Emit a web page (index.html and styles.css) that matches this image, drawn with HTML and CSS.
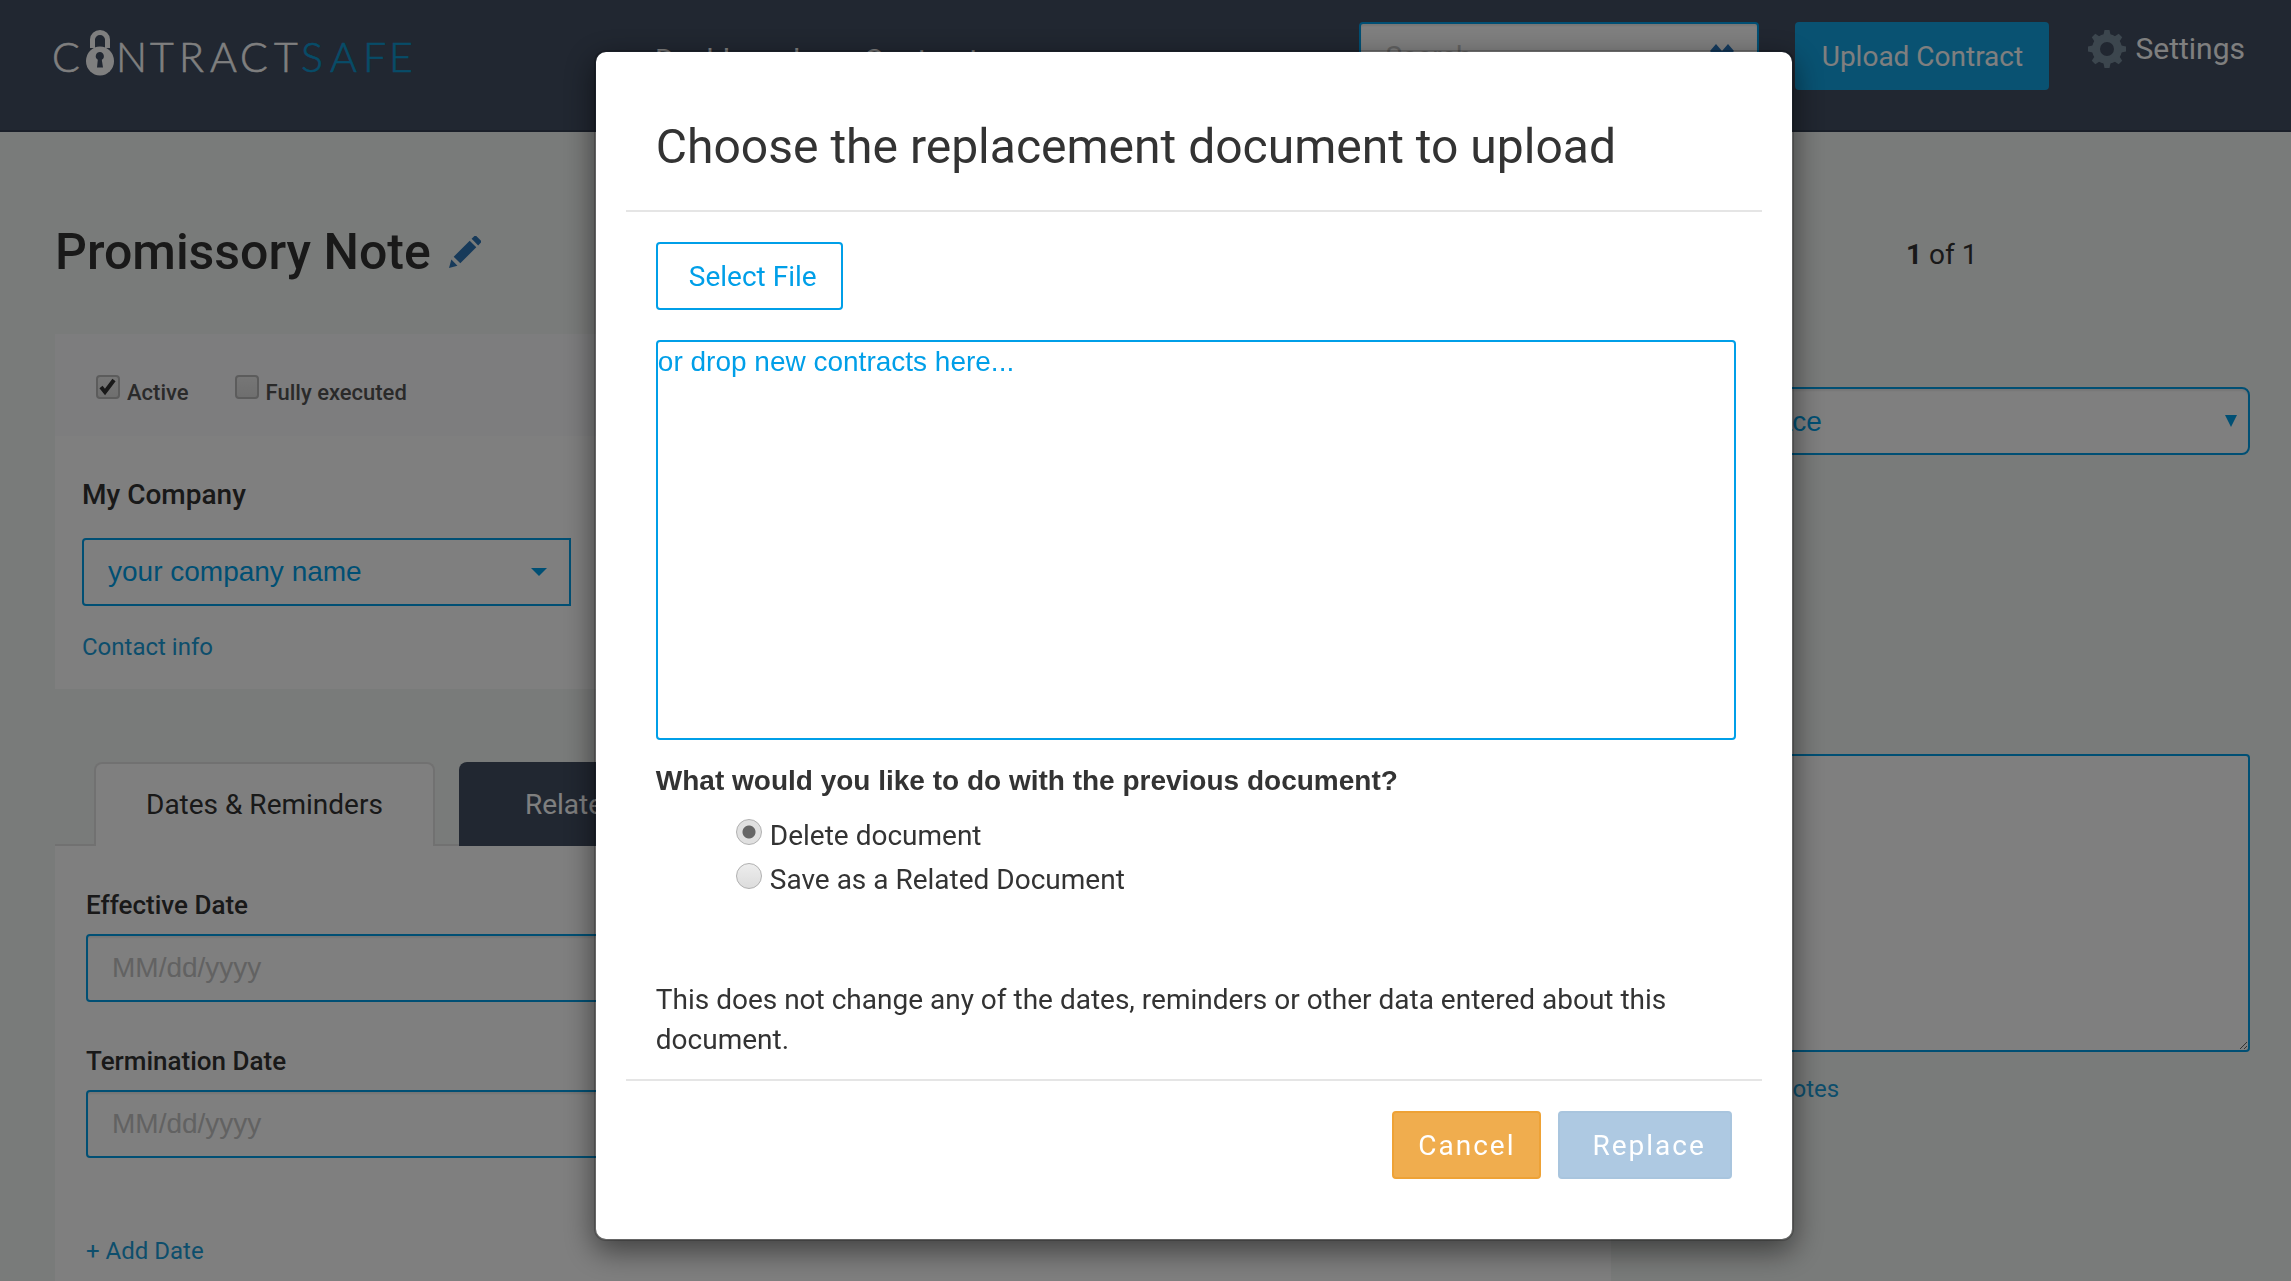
FILE: index.html
```html
<!DOCTYPE html>
<html lang="en">
<head>
    <meta charset="UTF-8">
    <meta name="viewport" content="width=device-width, initial-scale=1.0">
    <title>ContractSafe - Promissory Note</title>
    <link rel="stylesheet" href="styles.css">
</head>
<body>
    <header class="navbar">
        <a class="logo" href="#" aria-label="ContractSafe">
            <svg class="logo-image" viewBox="-6 -8 376 70">
                <text class="logo-text" y="42" x="-2 62 96 125 156 186 220">CNTRACT</text>
                <text class="logo-text logo-safe" y="42" x="247 276 309 335">SAFE</text>
                <path class="logo-shackle" d="M38.500 18V9.500a7.500 7 0 0 1 15 0V18"/>
                <ellipse class="logo-lock" cx="46" cy="31" rx="14" ry="14.500"/>
                <path class="logo-keyhole" d="M46 22a4.200 4.200 0 0 0-2.200 7.800L43 37.500h6l-1.200-7.700A4.200 4.200 0 0 0 46 22z"/>
            </svg>
        </a>
        <nav class="nav-links">
            <a href="#">Dashboard</a>
            <a href="#">Contracts</a>
        </nav>
        <div class="search">
            <input class="search-input" type="text" placeholder="Search" aria-label="Search">
            <button class="search-clear" aria-label="Clear search">
                <svg viewBox="0 0 24 24"><path d="M6 0l6 7 6-7 6 7-6 6 6 6-6 5-6-6-6 6-6-5 6-6-6-6z"/></svg>
            </button>
        </div>
        <button class="btn-upload">Upload Contract</button>
        <a class="settings" href="#">
            <svg class="settings-icon" viewBox="0 0 40 40">
                <circle cx="20" cy="20" r="11" fill="none" stroke="#798c9c" stroke-width="8"/>
                <path id="tooth" d="M17.500 1h5l1.500 7h-8z"/>
                <use href="#tooth" transform="rotate(45 20 20)"/>
                <use href="#tooth" transform="rotate(90 20 20)"/>
                <use href="#tooth" transform="rotate(135 20 20)"/>
                <use href="#tooth" transform="rotate(180 20 20)"/>
                <use href="#tooth" transform="rotate(225 20 20)"/>
                <use href="#tooth" transform="rotate(270 20 20)"/>
                <use href="#tooth" transform="rotate(315 20 20)"/>
            </svg>
            Settings
        </a>
    </header>

    <main class="page">
        <section class="contract">
            <div class="title-row">
                <h1 class="contract-title">Promissory Note</h1>
                <button class="edit-title" aria-label="Edit title">
                    <svg viewBox="0 0 34 34"><path d="M0 34l2.500-9 6.500 6.500zM5 22L22 5l7 7-17 17zM24 3l2.500-2.500a2 2 0 0 1 3 0l4 4a2 2 0 0 1 0 3L31 10z"/></svg>
                </button>
            </div>

            <div class="card">
                <div class="status-bar">
                    <label class="check"><input type="checkbox" checked> Active</label>
                    <label class="check"><input type="checkbox"> Fully executed</label>
                </div>
                <div class="company">
                    <label class="field-label company-label" for="company">My Company</label>
                    <select class="company-select" id="company">
                        <option>your company name</option>
                    </select>
                    <a class="link" href="#">Contact info</a>
                </div>
            </div>

            <div class="tabs">
                <button class="tab active">Dates &amp; Reminders</button>
                <button class="tab">Related</button>
            </div>
            <div class="tab-panel">
                <div class="field">
                    <label class="field-label" for="effective">Effective Date</label>
                    <input class="text-input" id="effective" type="text" placeholder="MM/dd/yyyy">
                </div>
                <div class="field">
                    <label class="field-label" for="termination">Termination Date</label>
                    <input class="text-input" id="termination" type="text" placeholder="MM/dd/yyyy">
                </div>
                <a class="link add-date" href="#">+ Add Date</a>
            </div>
        </section>

        <aside class="sidebar">
            <p class="pager"><strong>1</strong> of 1</p>
            <select class="side-select" aria-label="Action">
                <option>Select place</option>
            </select>
            <textarea class="notes" aria-label="Notes"></textarea>
            <a class="link notes-link" href="#">Show all notes</a>
        </aside>
    </main>

    <div class="backdrop">
        <div class="modal" role="dialog" aria-labelledby="modal-title">
            <div class="modal-header">
                <h2 class="modal-title" id="modal-title">Choose the replacement document to upload</h2>
            </div>
            <div class="modal-body">
                <button class="btn-select">Select File</button>
                <div class="drop-zone">or drop new contracts here...</div>
                <fieldset class="previous">
                    <legend>What would you like to do with the previous document?</legend>
                    <label class="radio"><input type="radio" name="previous" checked> Delete document</label>
                    <label class="radio"><input type="radio" name="previous"> Save as a Related Document</label>
                </fieldset>
                <p class="hint">This does not change any of the dates, reminders or other data entered about this document.</p>
            </div>
            <div class="modal-footer">
                <button class="btn btn-cancel">Cancel</button>
                <button class="btn btn-replace">Replace</button>
            </div>
        </div>
    </div>
</body>
</html>
```

FILE: styles.css
```css
* {
    margin: 0;
    padding: 0;
    box-sizing: border-box;
}

body {
    font-family: Roboto, sans-serif;
    font-size: 28px;
    line-height: 40px;
    color: #333;
    background: #f3f6f4;
    height: 100vh;
    overflow: hidden;
    display: flex;
    flex-direction: column;
}

a {
    text-decoration: none;
}

button,
input,
select,
textarea {
    font-family: inherit;
    font-size: 28px;
    color: inherit;
}

button {
    cursor: pointer;
}

/* Navbar */
.navbar {
    flex: none;
    height: 132px;
    padding: 22px 46px 0 48px;
    display: flex;
    align-items: flex-start;
    background: #424e62;
    border-bottom: 2px solid #343f52;
    color: #fff;
}

.logo-image {
    display: block;
    width: 376px;
    height: 70px;
}

.logo-text {
    font-family: Lato, sans-serif;
    font-size: 41px;
    font-weight: 300;
    fill: #fff;
    stroke: #fff;
    stroke-width: 0.6;
}

.logo-safe {
    fill: #0f98d0;
    stroke: #0f98d0;
}

.logo-shackle {
    fill: none;
    stroke: #fff;
    stroke-width: 5;
}

.logo-lock {
    fill: #fff;
}

.logo-keyhole {
    fill: #424e62;
}

.nav-links {
    flex: 1;
    margin: 18px 0 0 231px;
    display: flex;
    gap: 64px;
    font-size: 30px;
}

.nav-links a {
    color: #fff;
}

.search {
    position: relative;
    width: 400px;
    margin-right: 36px;
}

.search-input {
    width: 100%;
    height: 68px;
    padding: 0 60px 0 24px;
    border: 2px solid #009fe8;
    border-radius: 4px;
    background: #fff;
    box-shadow: inset 0 2px 2px rgba(0, 0, 0, 0.08);
}

.search-clear {
    position: absolute;
    top: 22px;
    right: 25px;
    width: 24px;
    height: 24px;
    border: none;
    background: none;
    fill: #2a77bd;
}

.search-clear svg {
    display: block;
}

.btn-upload {
    width: 254px;
    height: 68px;
    border: none;
    border-radius: 4px;
    background: #12a5e5;
    color: #fff;
}

.settings {
    margin-left: 38px;
    padding-top: 7px;
    display: flex;
    align-items: center;
    gap: 8px;
    font-size: 30px;
    color: #fff;
}

.settings-icon {
    width: 40px;
    height: 40px;
    fill: #798c9c;
}

/* Page */
.page {
    flex: 1;
    padding: 0 41px 0 55px;
    display: grid;
    grid-template-columns: minmax(0, 13fr) minmax(0, 5fr);
    gap: 40px;
}

.contract {
    display: flex;
    flex-direction: column;
}

.title-row {
    padding: 80px 0 42px;
    display: flex;
    align-items: center;
    gap: 18px;
}

.contract-title {
    font-size: 50px;
    font-weight: 500;
    line-height: 80px;
}

.edit-title {
    width: 32px;
    height: 32px;
    border: none;
    background: none;
    fill: #2f75b5;
}

.edit-title svg {
    display: block;
}

.card {
    background: #fff;
}

.status-bar {
    height: 102px;
    padding: 16px 41px 0;
    display: flex;
    align-items: center;
    gap: 46px;
    background: #fafbfd;
}

.check {
    display: flex;
    align-items: center;
    gap: 7px;
    font-size: 22px;
    font-weight: 500;
    color: #555;
}

.check input {
    appearance: none;
    width: 24px;
    height: 24px;
    margin-bottom: 12px;
    border: 2px solid #b8b8b8;
    border-radius: 4px;
    background: linear-gradient(#ededed, #dedede);
}

.check input:checked {
    background: url("data:image/svg+xml,%3Csvg xmlns='http://www.w3.org/2000/svg' viewBox='0 0 20 20'%3E%3Cpath d='M3 10l4 5L16 3' fill='none' stroke='%23333' stroke-width='4'/%3E%3C/svg%3E"), linear-gradient(#ededed, #dedede);
}

.company {
    padding: 39px 27px 22px;
    display: flex;
    flex-direction: column;
    align-items: flex-start;
}

.field-label {
    display: block;
    font-weight: 500;
}

.company-label {
    margin-bottom: 23px;
}

.company-select {
    appearance: none;
    width: 489px;
    height: 68px;
    margin-bottom: 21px;
    padding: 0 0 2px 24px;
    border: 2px solid #009fe8;
    border-radius: 4px 0 0 4px;
    font-family: "Liberation Sans", sans-serif;
    color: #009fe8;
    background: #fff url("data:image/svg+xml,%3Csvg xmlns='http://www.w3.org/2000/svg' viewBox='0 0 16 8'%3E%3Cpath d='M0 0h16L8 8z' fill='%23009fe8'/%3E%3C/svg%3E") no-repeat right 22px center / 16px 8px;
}

.link {
    font-size: 24px;
    color: #1a9cd8;
}

/* Tabs */
.tabs {
    margin-top: 73px;
    padding-left: 39px;
    display: flex;
    gap: 24px;
    border-bottom: 2px solid #e3e3e3;
}

.tab {
    height: 84px;
    margin-bottom: -2px;
    padding: 0 66px;
    border: none;
    border-radius: 8px 8px 0 0;
    background: #424e62;
    color: #fff;
}

.tab.active {
    padding: 0 50px 2px;
    border: 2px solid #e3e3e3;
    border-bottom: none;
    background: #fff;
    color: #333;
}

.tab-panel {
    flex: 1;
    padding: 39px 31px;
    background: #fff;
}

.field {
    margin-bottom: 39px;
}

.field .field-label {
    margin-bottom: 9px;
    font-size: 26px;
}

.text-input {
    width: 600px;
    height: 68px;
    display: block;
    padding: 0 24px;
    border: 2px solid #009fe8;
    border-radius: 4px;
    background: #fff;
    font-family: "Liberation Sans", sans-serif;
    box-shadow: inset 0 2px 2px rgba(0, 0, 0, 0.08);
}

::placeholder {
    color: #c4c4c4;
    opacity: 1;
}

.add-date {
    display: block;
    padding-top: 34px;
}

/* Right column */
.sidebar {
    display: flex;
    flex-direction: column;
}

.pager {
    margin: 103px 18px 0 0;
    height: 152px;
    text-align: center;
}

.side-select {
    appearance: none;
    height: 68px;
    padding-left: 16px;
    border: 2px solid #009fe8;
    border-radius: 8px;
    font-family: "Liberation Sans", sans-serif;
    color: #009fe8;
    background: #fff url("data:image/svg+xml,%3Csvg xmlns='http://www.w3.org/2000/svg' viewBox='0 0 12 12'%3E%3Cpath d='M0 0h12L6 12z' fill='%23009fe8'/%3E%3C/svg%3E") no-repeat right 11px center / 12px 12px;
    box-shadow: inset 0 2px 2px rgba(0, 0, 0, 0.08);
}

.notes {
    height: 298px;
    margin-top: 299px;
    border: 2px solid #009fe8;
    border-radius: 4px;
    background: #fff;
}

.notes-link {
    margin-top: 17px;
    padding-left: 32px;
}

/* Modal */
.backdrop {
    position: fixed;
    inset: 0;
    padding: 50px 21.7% 0 25.92%;
    background: rgba(0, 0, 0, 0.5);
}

.modal {
    padding: 0 30px 60px;
    border: 2px solid rgba(0, 0, 0, 0.2);
    border-radius: 12px;
    background: #fff;
    background-clip: padding-box;
    box-shadow: 0 10px 30px rgba(0, 0, 0, 0.5);
}

.modal-header {
    padding: 65px 30px 33px;
    border-bottom: 2px solid #e5e5e5;
}

.modal-title {
    font-size: 48px;
    font-weight: 400;
    line-height: 60px;
}

.modal-body {
    padding: 30px 26px 19px 30px;
}

.btn-select {
    height: 68px;
    padding: 0 24px 0 31px;
    border: 2px solid #009fe8;
    border-radius: 4px;
    background: #fff;
    color: #009fe8;
}

.drop-zone {
    height: 400px;
    margin-top: 30px;
    border: 2px solid #009fe8;
    border-radius: 4px;
    font-family: "Liberation Sans", sans-serif;
    color: #009fe8;
}

.previous {
    margin-top: 21px;
    border: none;
}

.previous legend {
    margin-bottom: 13px;
    font-family: "Liberation Sans", sans-serif;
    font-weight: bold;
}

.radio {
    height: 44px;
    padding-left: 80px;
    display: flex;
    align-items: center;
    gap: 8px;
}

.radio input {
    appearance: none;
    width: 26px;
    height: 26px;
    margin-bottom: 8px;
    border: 1px solid #b0b0b0;
    border-radius: 50%;
    background: linear-gradient(#ededed, #dcdcdc);
}

.radio input:checked {
    background: radial-gradient(circle, #666 6px, #e0e0e0 7px);
}

.hint {
    margin-top: 78px;
}

.modal-footer {
    padding: 30px 30px 0;
    border-top: 2px solid #e5e5e5;
    display: flex;
    justify-content: flex-end;
    gap: 17px;
}

.btn {
    height: 68px;
    padding: 0 24px;
    border: 2px solid;
    border-radius: 4px;
    color: #fff;
    letter-spacing: 2px;
}

.btn-cancel {
    background: #f0ad4e;
    border-color: #eea236;
}

.btn-replace {
    padding: 0 24px 0 32px;
    background: #aec9e2;
    border-color: #a9c5de;
}
```
